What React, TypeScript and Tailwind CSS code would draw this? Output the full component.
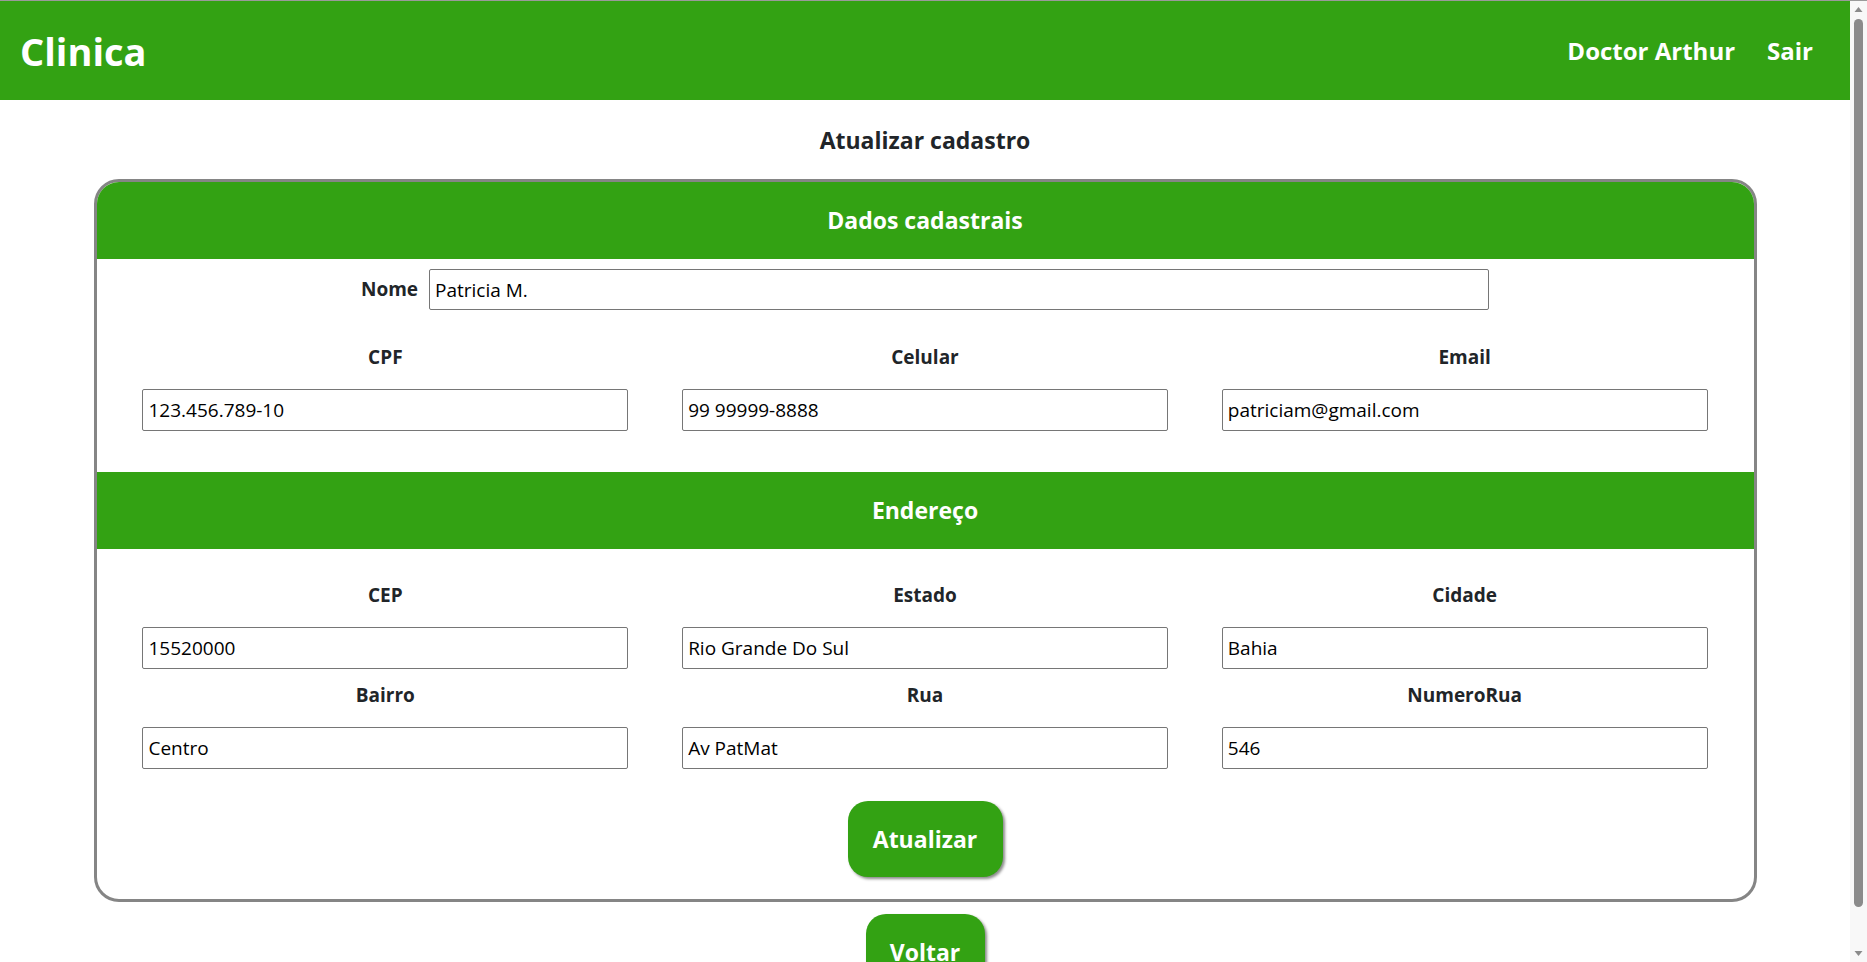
import React from "react";

const GREEN = "bg-[#33a213]";

function Field({ label, value }: { label: string; value: string }) {
  return (
    <div className="flex flex-col items-center">
      <label className="block h-[26px] leading-[26px] text-[19px] font-bold text-[#212529]">{label}</label>
      <input
        readOnly
        value={value}
        className="mt-[19px] w-[90%] h-[42px] border border-[#767676] rounded-[2px] px-[5px] text-[19px] text-black bg-white outline-none"
      />
    </div>
  );
}

function ScrollBar() {
  return (
    <aside className="w-[17px] flex-none h-full bg-[#f8f8f8] flex flex-col items-center">
      <svg width="17" height="17" viewBox="0 0 17 17" className="flex-none">
        <path d="M4.5 11 L8.5 6 L12.5 11 Z" fill="#8b8b8b" />
      </svg>
      <div className="mt-[1px] w-[9px] h-[888px] rounded-full bg-[#8b8b8b]" />
      <div className="flex-1" />
      <svg width="17" height="17" viewBox="0 0 17 17" className="flex-none">
        <path d="M4.5 6 L8.5 11 L12.5 6 Z" fill="#8b8b8b" />
      </svg>
    </aside>
  );
}

export default function App() {
  return (
    <div
      className="h-[962px] overflow-hidden flex border-t border-[#9a9a9a] bg-white text-[#212529]"
      style={{ fontFamily: '"Segoe UI", "Open Sans", "Noto Sans", sans-serif' }}
    >
      <main className="flex-1 min-w-0">
        <header className={`${GREEN} h-[99px] flex items-center justify-between pl-[20px] pr-[37px] text-white`}>
          <div className="text-[38px] font-bold leading-none">Clinica</div>
          <nav className="flex items-center gap-[32px] text-[24px] font-bold">
            <span>Doctor Arthur</span>
            <span>Sair</span>
          </nav>
        </header>

        <h2 className="mt-[24px] text-center text-[23px] font-bold leading-[32px]">Atualizar cadastro</h2>

        <div className="mx-auto mt-[23px] w-[1663px] border-[3px] border-[#858585] rounded-[25px] overflow-hidden">
          <div className={`${GREEN} h-[77px] flex items-center justify-center text-white text-[23px] font-bold`}>Dados cadastrais</div>

          <div className="mt-[10px] flex items-center justify-center gap-[11px]">
            <label className="text-[19px] font-bold">Nome</label>
            <input
              readOnly
              value="Patricia M."
              className="w-[1060px] h-[41px] border border-[#767676] rounded-[2px] px-[5px] text-[19px] text-black bg-white outline-none"
            />
          </div>

          <div className="mt-[34px] grid grid-cols-3 px-[19px]">
            <Field label="CPF" value="123.456.789-10" />
            <Field label="Celular" value="99 99999-8888" />
            <Field label="Email" value="patriciam@gmail.com" />
          </div>

          <div className={`${GREEN} mt-[41px] h-[77px] flex items-center justify-center text-white text-[23px] font-bold`}>Endereço</div>

          <div className="mt-[33px] grid grid-cols-3 gap-y-[13px] px-[19px]">
            <Field label="CEP" value="15520000" />
            <Field label="Estado" value="Rio Grande Do Sul" />
            <Field label="Cidade" value="Bahia" />
            <Field label="Bairro" value="Centro" />
            <Field label="Rua" value="Av PatMat" />
            <Field label="NumeroRua" value="546" />
          </div>

          <div className="mt-[32px] mb-[22px] flex justify-center">
            <button className={`${GREEN} w-[155px] h-[76px] rounded-[20px] text-white text-[23px] font-bold shadow-[2px_2px_3px_#8a8a8a]`}>Atualizar</button>
          </div>
        </div>

        <div className="mt-[12px] flex justify-center">
          <button className={`${GREEN} w-[119px] h-[76px] rounded-[20px] text-white text-[23px] font-bold shadow-[2px_2px_3px_#8a8a8a]`}>Voltar</button>
        </div>
      </main>
      <ScrollBar />
    </div>
  );
}
